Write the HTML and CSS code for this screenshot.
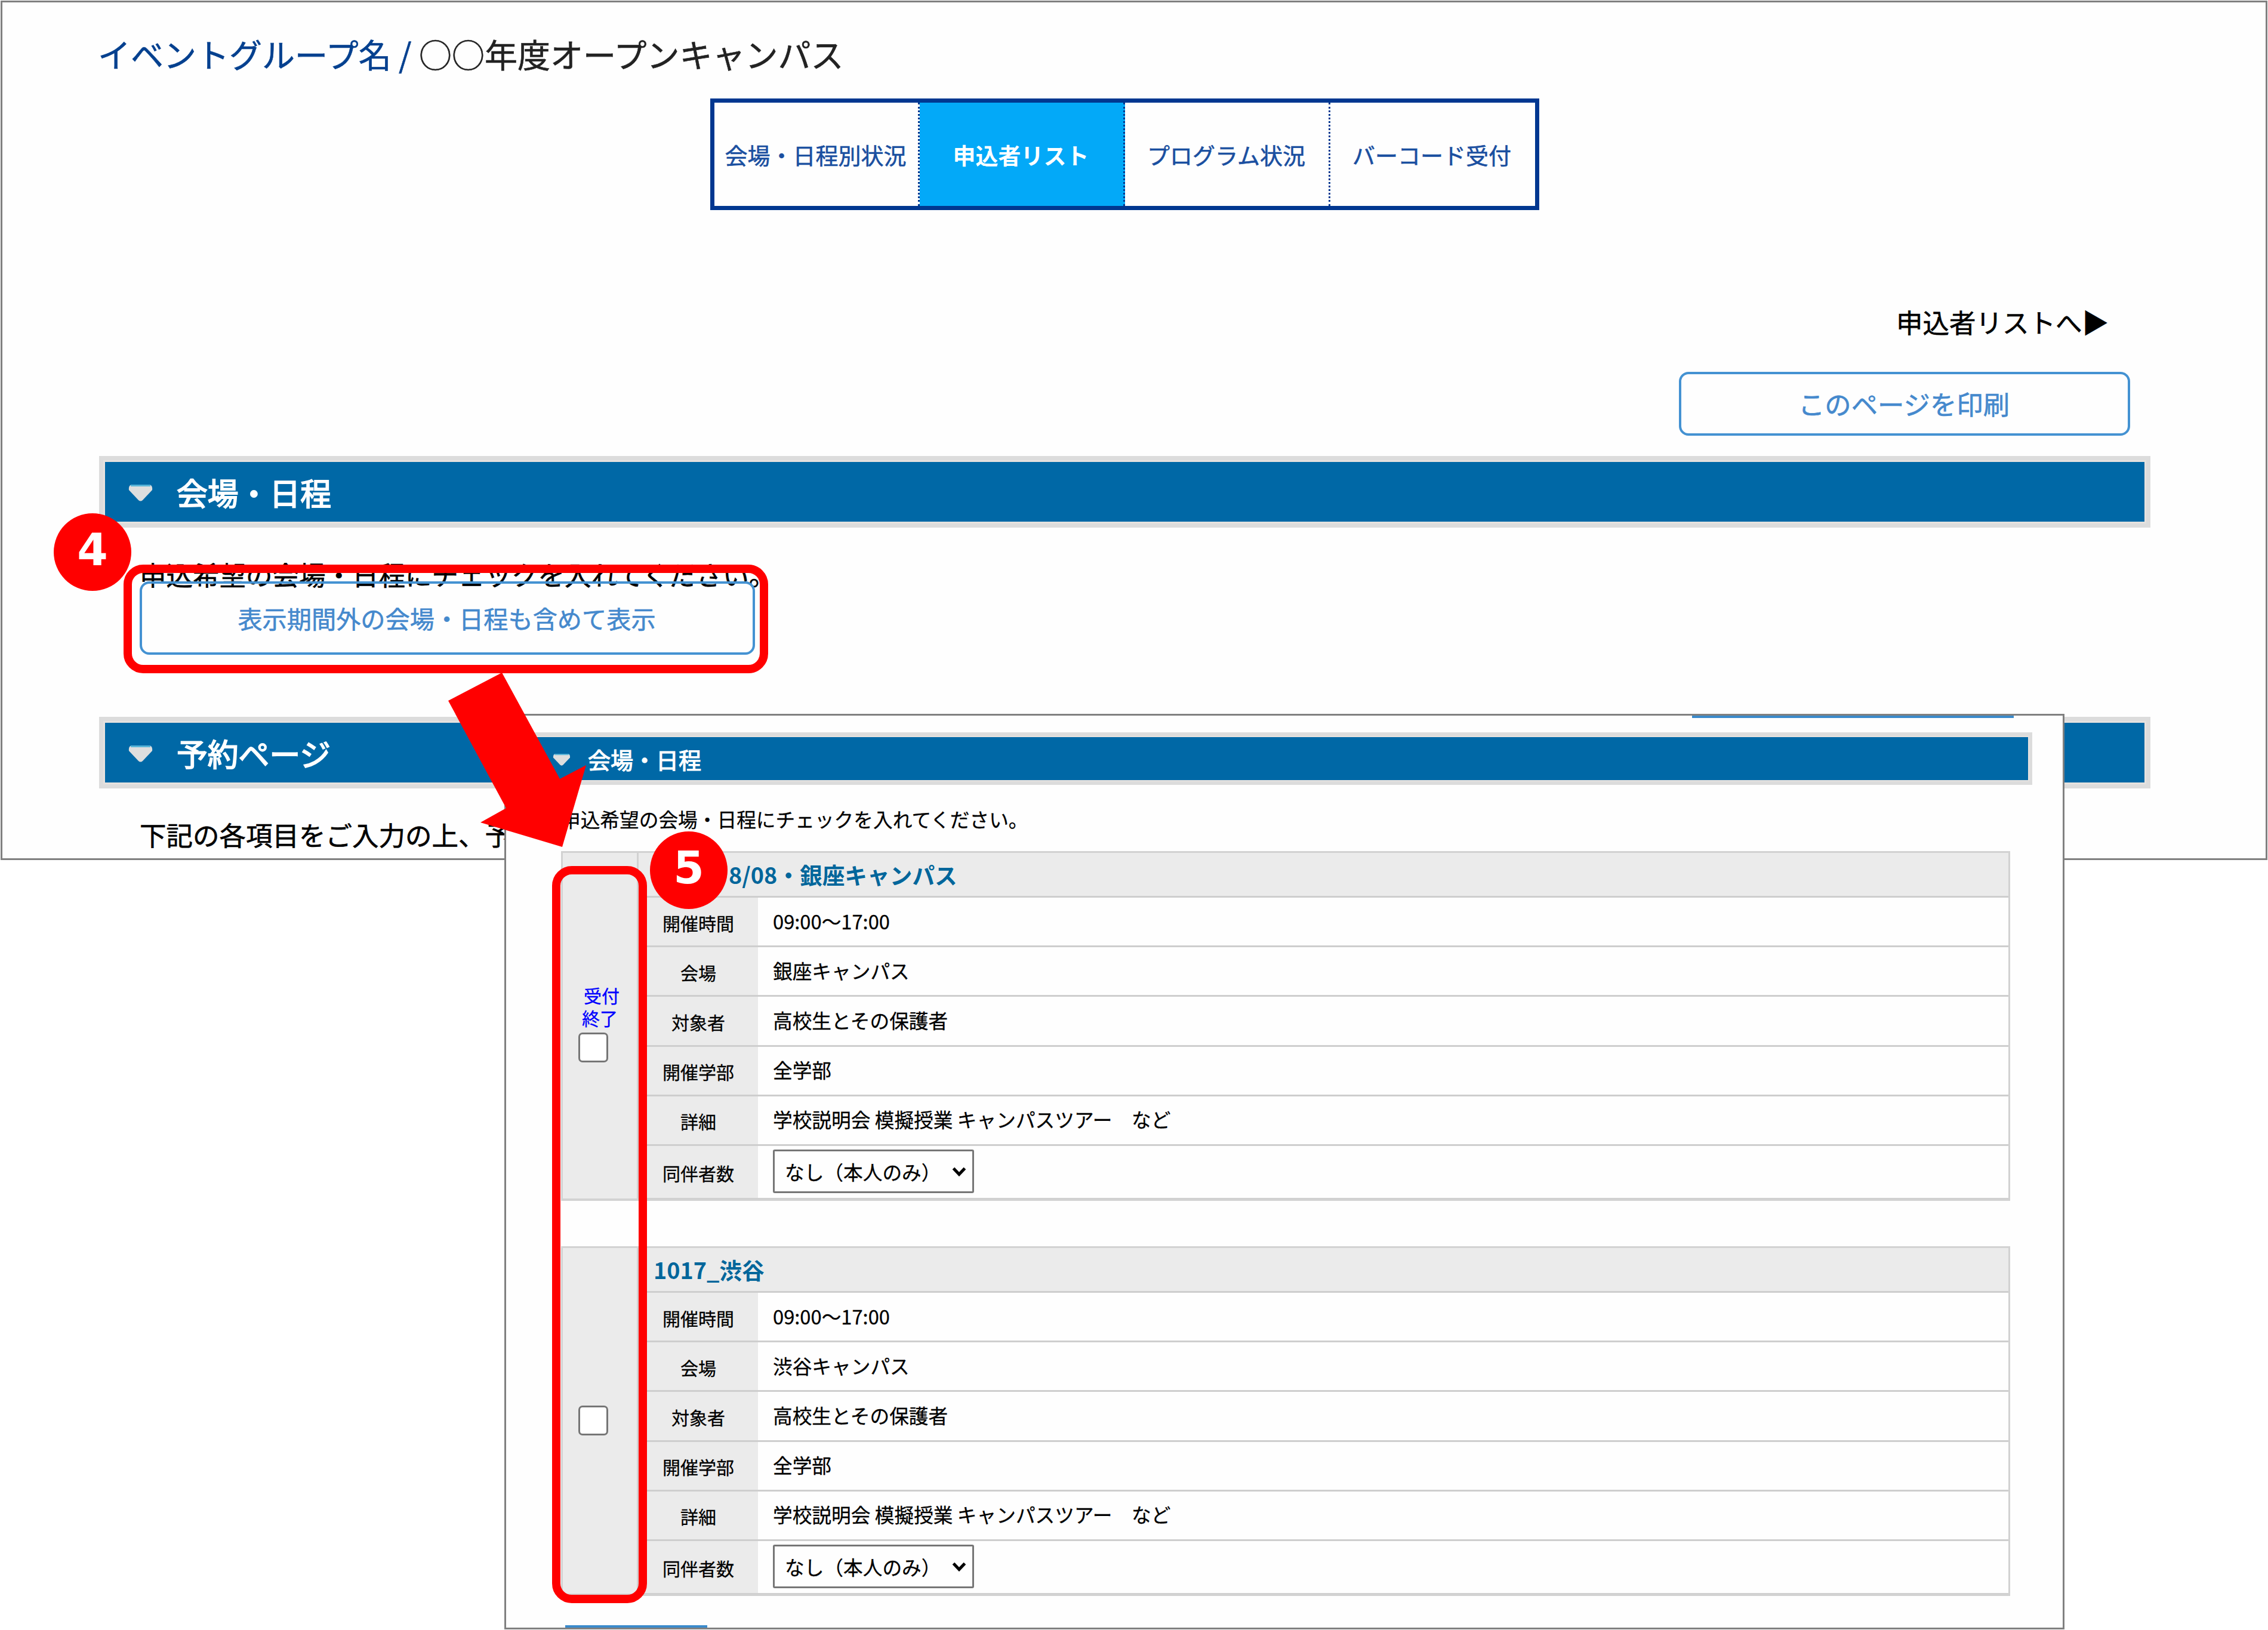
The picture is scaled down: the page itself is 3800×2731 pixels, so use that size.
FILE: index.html
```html
<!DOCTYPE html>
<html lang="ja">
<head>
<meta charset="utf-8">
<title>申込者リスト</title>
<link rel="stylesheet" href="styles.css">
</head>
<body>
<main class="canvas">
  <section class="window window-main">
    <h1 class="page-title"><a class="crumb">イベントグループ名 /</a> ○○年度オープンキャンパス</h1>
    <nav class="tabs">
      <a class="tab">会場・日程別状況</a>
      <a class="tab tab-active">申込者リスト</a>
      <a class="tab">プログラム状況</a>
      <a class="tab">バーコード受付</a>
    </nav>
    <a class="list-link">申込者リストへ▶</a>
    <button class="btn btn-print">このページを印刷</button>
    <h2 class="bar"><svg class="caret" viewBox="0 0 41 28"><path d="M5 0H36Q41 2 40 9L24 26Q20.500 29 17 26L1 9Q0 2 5 0Z" fill="#dedede"/><path d="M4 1.500H37" stroke="#58b4d8" stroke-width="3"/></svg>会場・日程</h2>
    <p class="lead">申込希望の会場・日程にチェックを入れてください。</p>
    <button class="btn btn-all">表示期間外の会場・日程も含めて表示</button>
    <h2 class="bar bar-second"><svg class="caret" viewBox="0 0 41 28"><path d="M5 0H36Q41 2 40 9L24 26Q20.500 29 17 26L1 9Q0 2 5 0Z" fill="#dedede"/><path d="M4 1.500H37" stroke="#58b4d8" stroke-width="3"/></svg>予約ページ</h2>
    <p class="lead lead-second">下記の各項目をご入力の上、予</p>
  </section>

  <section class="window window-detail">
    <div class="edge edge-top"></div>
    <h2 class="bar bar-small"><svg class="caret" viewBox="0 0 41 28"><path d="M5 0H36Q41 2 40 9L24 26Q20.500 29 17 26L1 9Q0 2 5 0Z" fill="#dedede"/><path d="M4 1.500H37" stroke="#58b4d8" stroke-width="3"/></svg>会場・日程</h2>
    <p class="note">申込希望の会場・日程にチェックを入れてください。</p>

    <div class="session">
      <div class="pick pick-closed"><span class="closed"><span class="closed-first">受付</span>終了</span><span class="box"></span></div>
      <div class="info">
        <h3 class="name name-tucked">8/08・銀座キャンパス</h3>
        <div class="row"><div class="label">開催時間</div><div class="value">09:00～17:00</div></div>
        <div class="row"><div class="label">会場</div><div class="value">銀座キャンパス</div></div>
        <div class="row"><div class="label">対象者</div><div class="value">高校生とその保護者</div></div>
        <div class="row"><div class="label">開催学部</div><div class="value">全学部</div></div>
        <div class="row"><div class="label">詳細</div><div class="value">学校説明会 模擬授業 キャンパスツアー　など</div></div>
        <div class="row row-last"><div class="label">同伴者数</div><div class="value"><div class="select">なし（本人のみ）<svg class="chevron" viewBox="0 0 24 16"><path d="M2.500 2.500L12 12.500L21.500 2.500" fill="none" stroke="#000" stroke-width="5"/></svg></div></div></div>
      </div>
    </div>

    <div class="session session-next">
      <div class="pick"><span class="box"></span></div>
      <div class="info">
        <h3 class="name">1017_渋谷</h3>
        <div class="row"><div class="label">開催時間</div><div class="value">09:00～17:00</div></div>
        <div class="row"><div class="label">会場</div><div class="value">渋谷キャンパス</div></div>
        <div class="row"><div class="label">対象者</div><div class="value">高校生とその保護者</div></div>
        <div class="row"><div class="label">開催学部</div><div class="value">全学部</div></div>
        <div class="row"><div class="label">詳細</div><div class="value">学校説明会 模擬授業 キャンパスツアー　など</div></div>
        <div class="row row-last"><div class="label">同伴者数</div><div class="value"><div class="select">なし（本人のみ）<svg class="chevron" viewBox="0 0 24 16"><path d="M2.500 2.500L12 12.500L21.500 2.500" fill="none" stroke="#000" stroke-width="5"/></svg></div></div></div>
      </div>
    </div>
    <div class="edge edge-bottom"></div>
  </section>

  <div class="mark mark-button"></div>
  <div class="mark mark-checks"></div>
  <svg class="arrow" viewBox="0 0 232 292"><path d="M90 0L0 47L97 227L54 251L191 292L231 155L187 178Z" fill="#f00"/></svg>
  <div class="step step-four">4</div>
  <div class="step step-five">5</div>
</main>
</body>
</html>
```
FILE: styles.css
```css
* { box-sizing: border-box; }
body {
  margin: 0;
  background: #fff;
  color: #000;
  font-family: "Noto Sans CJK JP", sans-serif;
}
h1, h2, h3, p { margin: 0; font-weight: 400; }
.canvas { position: relative; width: 3800px; height: 2731px; overflow: hidden; }

.window {
  position: absolute;
  display: flex;
  flex-direction: column;
  align-items: flex-start;
  background: #fefefe;
  border: 3px solid #808080;
  overflow: hidden;
  white-space: nowrap;
  -webkit-text-stroke: 0.600px currentColor;
}
.window-main { left: 1px; top: 1px; width: 3798px; height: 1440px; padding: 45px 193px 0 162px; }
.window-detail { left: 845px; top: 1196px; width: 2614px; height: 1534px; -webkit-text-stroke-width: 0.300px; }

.page-title { margin-left: -2px; font-size: 55px; line-height: 80px; color: #222; }
.crumb { color: #04408f; }

.tabs {
  display: grid;
  grid-template-columns: 344px 344px 344px 1fr;
  width: 1389px;
  height: 187px;
  margin: 36px 0 0 1024px;
  border: 7px solid #003790;
}
.tab {
  display: flex;
  align-items: center;
  justify-content: center;
  padding: 1px 2px 0 0;
  border-right: 3px dotted #003790;
  font-size: 38px;
  line-height: 56px;
  color: #1a4fa0;
}
.tab:last-child { border-right: 0; padding-right: 3px; }
.tab-active { background: #03a9f8; color: #fff; font-weight: 700; -webkit-text-stroke: 0; }

.list-link { align-self: flex-end; margin: 157px 70px 0 0; font-size: 44.500px; line-height: 60px; }

.btn {
  display: flex;
  align-items: center;
  justify-content: center;
  padding: 0 2px 2px 0;
  background: transparent;
  border: 4px solid #4492d2;
  border-radius: 16px;
  font-family: inherit;
  color: #4589cd;
}
.btn-print { align-self: flex-end; width: 756px; height: 107px; margin: 54px 34px 0 0; font-size: 44.400px; }
.btn-all { width: 1031px; height: 123px; margin: -18px 0 0 68px; font-size: 41.200px; }

.bar {
  display: flex;
  align-items: center;
  gap: 40px;
  width: 3437px;
  height: 120px;
  margin-top: 34px;
  padding-left: 42px;
  background: #0068a6;
  border: 7px solid #dcdcdc;
  box-shadow: inset 0 0 0 3px #e6e2df;
  font-size: 51.800px;
  color: #fff;
  -webkit-text-stroke: 1.800px #fff;
}
.caret { width: 41px; height: 28px; margin-top: 4px; }
.bar-second { margin-top: 104px; }
.bar-small {
  gap: 29px;
  width: 2516px;
  height: 89px;
  margin: 24px 0 0 41px;
  padding-left: 32px;
  border-width: 6px 5px;
  box-shadow: inset 0 0 0 2px #e6e2df;
  font-size: 38px;
  -webkit-text-stroke-width: 1.200px;
}
.bar-small .caret { width: 30px; height: 20px; }

.lead { margin: 48px 0 0 68px; font-size: 44.500px; line-height: 60px; }
.lead-second { margin-top: 47px; }
.note { margin: 32px 0 0 92px; font-size: 32.700px; line-height: 50px; }

.edge { flex: none; height: 4px; background: #3a8acb; }
.edge-top { width: 539px; margin-left: 1987px; }
.edge-bottom { width: 238px; margin: 49px 0 0 99px; }

.session {
  display: grid;
  grid-template-columns: 124px 1fr;
  flex: none;
  width: 2428px;
  height: 586px;
  margin: 29px 0 0 92px;
  border: 3px solid #d2d2d2;
  border-bottom-width: 4px;
}
.session-next { margin-top: 76px; }
.pick {
  display: flex;
  flex-direction: column;
  justify-content: center;
  padding: 0 0 2px 26px;
  background: #ebebeb;
}
.pick-closed { padding-bottom: 9px; }
.closed { display: block; padding: 0 0 6px 6px; font-size: 30px; line-height: 38px; color: #00f; white-space: normal; }
.closed-first { display: block; padding-left: 3px; }
.box { width: 50px; height: 50px; background: #fff; border: 3px solid #767676; border-radius: 7px; }
.info { display: flex; flex-direction: column; border-left: 3px solid #d2d2d2; }
.name {
  height: 75px;
  padding-left: 25px;
  background: #ebebeb;
  border-bottom: 3px solid #cecece;
  font-size: 37.700px;
  line-height: 71px;
  font-weight: 700;
  color: #00669b;
  -webkit-text-stroke: 0;
}
.name-tucked { padding-left: 151px; }
.row { display: grid; grid-template-columns: 200px 1fr; flex: none; height: 83.200px; border-bottom: 3px solid #cecece; }
.row-last { flex: 1; border-bottom: 1px solid #cecece; }
.label { display: flex; align-items: center; justify-content: center; padding-top: 3px; background: #ebebeb; font-size: 30px; }
.value { display: flex; align-items: center; padding: 0 0 4px 25px; font-size: 32.700px; }
.row-last .value { padding-bottom: 1px; }
.select {
  display: flex;
  align-items: center;
  gap: 18px;
  width: 337px;
  height: 73px;
  padding: 0 0 0 17px;
  border: 3px solid #767676;
  border-radius: 3px;
}
.chevron { width: 24px; height: 16px; }

.mark { position: absolute; border: 14px solid #f00; border-radius: 33px; }
.mark-button { left: 207px; top: 946px; width: 1080px; height: 182px; }
.mark-checks { left: 925px; top: 1451px; width: 159px; height: 1235px; }
.arrow { position: absolute; left: 751px; top: 1127px; width: 232px; height: 292px; }
.step {
  position: absolute;
  width: 130px;
  height: 130px;
  border-radius: 50%;
  background: #f00;
  color: #fff;
  font: 700 74px/122px "DejaVu Sans", sans-serif;
  text-align: center;
}
.step-four { left: 90px; top: 860px; }
.step-five { left: 1089px; top: 1393px; }
```
